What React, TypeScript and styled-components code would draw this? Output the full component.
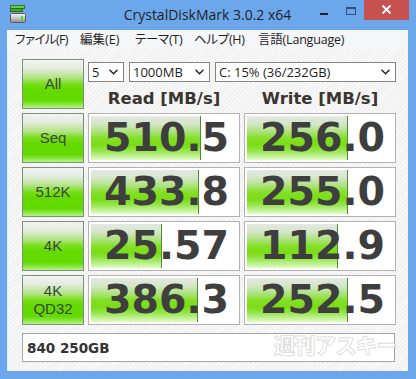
import React from 'react';
import styled, { createGlobalStyle } from 'styled-components';

const GlobalStyle = createGlobalStyle`
  html, body { margin: 0; padding: 0; background: #6ca7ec; }
  * { box-sizing: border-box; }
`;

const Window = styled.div`
  width: 416px;
  height: 379px;
  background: #6ca7ec;
  display: flex;
  flex-direction: column;
  padding: 0 8px 8px 7px;
  overflow: hidden;
`;

const TitleBar = styled.div`
  height: 30px;
  display: grid;
  grid-template-columns: 1fr auto 1fr;
  align-items: start;
`;

const IconWrap = styled.div`
  padding: 5px 0 0 3px;
  display: flex;
`;

const Title = styled.div`
  font-family: "Open Sans", "Noto Sans", sans-serif;
  font-size: 14px;
  line-height: 19px;
  color: #1f1f1f;
  padding-top: 5px;
  white-space: nowrap;
`;

const Controls = styled.div`
  display: flex;
  justify-content: flex-end;
  margin-right: -1px;
`;

const CtrlButton = styled.div<{ $w: number; $bg?: string; $pt: number }>`
  width: ${p => p.$w}px;
  height: 20px;
  background: ${p => p.$bg || 'transparent'};
  display: flex;
  justify-content: center;
  align-items: flex-start;
  padding-top: ${p => p.$pt}px;
`;

const MinDash = styled.div`
  width: 8px;
  height: 2px;
  background: #222;
`;

const MaxBox = styled.div`
  width: 10px;
  height: 8px;
  border: 1px solid #34507a;
  border-top-width: 2px;
`;

const MenuBar = styled.div`
  height: 19px;
  background: #f5f6f7;
  display: flex;
  align-items: center;
  padding: 1px 0 0 8px;
  font-family: "Open Sans", "Noto Sans CJK JP", sans-serif;
  font-feature-settings: "palt";
  font-size: 12.5px;
  line-height: 18px;
  color: #1e1e1e;
`;

const MenuItem = styled.span<{ $w: number; $ls: number }>`
  width: ${p => p.$w}px;
  letter-spacing: ${p => p.$ls}px;
  white-space: nowrap;
`;

const Client = styled.div`
  flex: 1;
  padding: 10px 13px 0 14px;
  border-left: 1px solid #e6eef8;
  background: repeating-linear-gradient(
    135deg,
    #f1f1f1 0px,
    #f1f1f1 2px,
    #fbfbfb 2px,
    #fbfbfb 3px
  );
`;

const Grid = styled.div`
  display: grid;
  grid-template-columns: 62px 152px 152px;
  grid-auto-rows: 50px;
  column-gap: 4px;
  row-gap: 4px;
`;

const TestButton = styled.div`
  border: 1px solid #7e8e7e;
  background: linear-gradient(
    to bottom,
    #f3f3f3 0%,
    #e2ecdc 18%,
    #b4e488 36%,
    #76de18 50%,
    #64da00 62%,
    #62da00 84%,
    #86e63c 92%,
    #b6f486 100%
  );
  display: flex;
  flex-direction: column;
  align-items: center;
  justify-content: center;
  font-family: "Liberation Sans", Arial, sans-serif;
  font-size: 15px;
  line-height: 18px;
  color: #3c463c;
  text-align: center;
`;

const TopPanel = styled.div`
  grid-column: 2 / span 2;
  display: flex;
  flex-direction: column;
  padding-top: 3px;
`;

const SelectRow = styled.div`
  display: flex;
  gap: 5px;
`;

const Select = styled.div<{ $w: number }>`
  width: ${p => p.$w}px;
  height: 20px;
  border: 1px solid #848484;
  background: #fff;
  display: flex;
  align-items: center;
  justify-content: space-between;
  padding: 0 5px 0 3px;
  font-family: "Open Sans", "Noto Sans", sans-serif;
  font-size: 13px;
  color: #1e1e1e;
  white-space: nowrap;
`;

const HeaderRow = styled.div`
  display: grid;
  grid-template-columns: 152px 152px;
  column-gap: 4px;
  margin-top: 7px;
`;

const Header = styled.div`
  text-align: center;
  font-family: "DejaVu Sans", Verdana, sans-serif;
  font-weight: bold;
  font-size: 16.5px;
  line-height: 20px;
  color: #3a3530;
  white-space: nowrap;
`;

const ValueBox = styled.div`
  border: 1px solid #b2b2b2;
  padding: 1px 10px 1px 1px;
  background-color: #fff;
  background-image:
    linear-gradient(#4e8e2e, #4e8e2e),
    linear-gradient(
      to bottom,
      #e4e8e3 0%,
      #d4e6c8 18%,
      #ace27a 36%,
      #84e028 50%,
      #7adc14 66%,
      #98e652 80%,
      #c8f4a0 93%,
      #dcfcc4 100%
    );
  background-repeat: no-repeat;
  background-origin: content-box;
  background-clip: padding-box;
  background-position: calc(var(--bar) + 1px) 1px, 1px 1px;
  background-size: 1px calc(100% - 2px), var(--bar) calc(100% - 2px);
  display: flex;
  align-items: center;
  justify-content: flex-end;
  font-family: "DejaVu Sans", Verdana, sans-serif;
  font-weight: bold;
  font-size: 39.5px;
  line-height: 1;
  color: #3e3e3e;
  white-space: nowrap;
`;

const Comment = styled.div`
  position: relative;
  margin-top: 8px;
  height: 29px;
  border: 1px solid #a4a4a4;
  background: #fff;
  display: flex;
  align-items: center;
  padding-left: 4px;
  font-family: "DejaVu Sans", Verdana, sans-serif;
  font-weight: bold;
  font-size: 13.5px;
  color: #333;
`;

const Watermark = styled.span`
  position: absolute;
  right: -3px;
  top: -3px;
  font-family: "Noto Sans CJK JP", sans-serif;
  font-weight: 900;
  font-size: 21px;
  line-height: 26px;
  letter-spacing: -0.5px;
  color: rgba(255, 255, 255, 0.75);
  -webkit-text-stroke: 1px rgba(180, 180, 180, 0.45);
  white-space: nowrap;
`;

const AppIcon = () => (
  <svg width="16" height="19" viewBox="0 0 16 19">
    <rect x="0.5" y="0.5" width="14" height="3" fill="#5fd43a" stroke="#2f7a22" />
    <rect x="0.5" y="3.5" width="12" height="3" fill="#3fa82a" stroke="#2f6a22" />
    <defs>
      <linearGradient id="hdd" x1="0" y1="0" x2="0" y2="1">
        <stop offset="0" stopColor="#f4f4f4" />
        <stop offset="0.5" stopColor="#c8c8c8" />
        <stop offset="1" stopColor="#8a8a8a" />
      </linearGradient>
    </defs>
    <rect x="0.5" y="8.5" width="15" height="9" rx="1" fill="url(#hdd)" stroke="#5a5a5a" />
    <rect x="11" y="11" width="2" height="4" fill="#3ee03e" />
  </svg>
);

const Chevron = () => (
  <svg width="9" height="6" viewBox="0 0 9 6">
    <polyline points="0.5,0.8 4.5,4.8 8.5,0.8" fill="none" stroke="#222" strokeWidth="1.4" />
  </svg>
);

const barWidth = (v: number) => Math.round(30 * (Math.log10(v) + 1)) - 2;

type Row = { label: string[]; read: string; write: string };

const rows: Row[] = [
  { label: ['Seq'], read: '510.5', write: '256.0' },
  { label: ['512K'], read: '433.8', write: '255.0' },
  { label: ['4K'], read: '25.57', write: '112.9' },
  { label: ['4K', 'QD32'], read: '386.3', write: '252.5' },
];

const menus: { text: string; w: number; ls: number }[] = [
  { text: 'ファイル(F)', w: 65, ls: -0.6 },
  { text: '編集(E)', w: 55, ls: 0 },
  { text: 'テーマ(T)', w: 59, ls: -0.3 },
  { text: 'ヘルプ(H)', w: 64, ls: -0.3 },
  { text: '言語(Language)', w: 100, ls: -0.2 },
];

const Value = ({ v }: { v: string }) => (
  <ValueBox style={{ ['--bar' as any]: `${barWidth(parseFloat(v))}px` }}>{v}</ValueBox>
);

export default function App() {
  return (
    <>
      <GlobalStyle />
      <Window>
        <TitleBar>
          <IconWrap>
            <AppIcon />
          </IconWrap>
          <Title>CrystalDiskMark 3.0.2 x64</Title>
          <Controls>
            <CtrlButton $w={26} $pt={13}>
              <MinDash />
            </CtrlButton>
            <CtrlButton $w={27} $pt={7}>
              <MaxBox />
            </CtrlButton>
            <CtrlButton $w={45} $bg="#c75050" $pt={4}>
              <svg width="11" height="11" viewBox="0 0 11 11">
                <path d="M1.5 1.5 L9.5 9.5 M9.5 1.5 L1.5 9.5" stroke="#fff" strokeWidth="2" />
              </svg>
            </CtrlButton>
          </Controls>
        </TitleBar>
        <MenuBar>
          {menus.map(m => (
            <MenuItem key={m.text} $w={m.w} $ls={m.ls}>
              {m.text}
            </MenuItem>
          ))}
        </MenuBar>
        <Client>
          <Grid>
            <TestButton>All</TestButton>
            <TopPanel>
              <SelectRow>
                <Select $w={36}>
                  <span>5</span>
                  <Chevron />
                </Select>
                <Select $w={81}>
                  <span>1000MB</span>
                  <Chevron />
                </Select>
                <Select $w={181}>
                  <span>C: 15% (36/232GB)</span>
                  <Chevron />
                </Select>
              </SelectRow>
              <HeaderRow>
                <Header>Read [MB/s]</Header>
                <Header>Write [MB/s]</Header>
              </HeaderRow>
            </TopPanel>
            {rows.map(r => (
              <React.Fragment key={r.label.join(' ')}>
                <TestButton>
                  {r.label.map(l => (
                    <span key={l}>{l}</span>
                  ))}
                </TestButton>
                <Value v={r.read} />
                <Value v={r.write} />
              </React.Fragment>
            ))}
          </Grid>
          <Comment>
            840 250GB
            <Watermark>週刊アスキー</Watermark>
          </Comment>
        </Client>
      </Window>
    </>
  );
}
